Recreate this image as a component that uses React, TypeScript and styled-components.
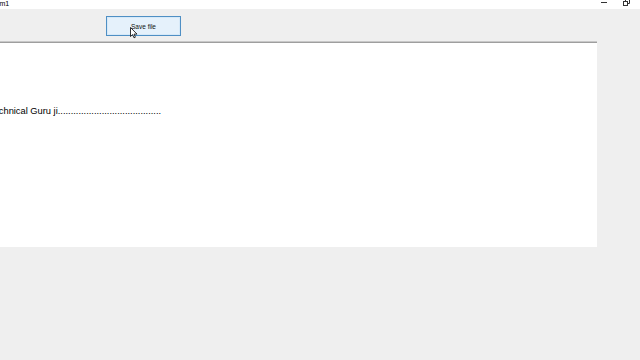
import * as React from 'react';
import styled, { createGlobalStyle } from 'styled-components';

const SHIFT = 11;

const GlobalStyle = createGlobalStyle`
    html, body {
        margin: 0;
        padding: 0;
        width: 640px;
        height: 360px;
        overflow: hidden;
        background: #efefef;
        font-family: "Liberation Sans", Arial, sans-serif;
    }
`;

const Screen = styled.div`
    position: relative;
    width: 640px;
    height: 360px;
    overflow: hidden;
    background: #efefef;
`;

const TitleBar = styled.div`
    height: 9px;
    background: #ffffff;
    display: flex;
    align-items: center;
    justify-content: space-between;
`;

const TitleText = styled.div`
    margin-left: -${SHIFT}px;
    font-size: 7px;
    line-height: 9px;
    margin-top: -2px;
    color: #000;
`;

const WindowButtons = styled.div`
    display: flex;
    align-items: center;
    gap: 16px;
    padding-right: 10px;
    height: 9px;
`;

const Minimize = styled.div`
    width: 6px;
    height: 1px;
    background: #333;
    margin-top: -4px;
`;

const Restore = styled.svg`
    width: 7px;
    height: 7px;
    margin-top: -5px;
`;

const Toolbar = styled.div`
    height: 33px;
    display: flex;
    align-items: flex-start;
    padding-top: 7px;
    box-sizing: border-box;
    padding-left: 106px;
`;

const Button = styled.button`
    width: 75px;
    height: 20px;
    background: #e5f1fb;
    border: 1px solid #4f8fc4;
    box-shadow: inset 0 0 0 1px #d6e9f8;
    font-family: "Liberation Sans", Arial, sans-serif;
    font-size: 6.5px;
    color: #111;
    padding: 0;
`;

const TextArea = styled.div`
    width: 597px;
    height: 205px;
    background: #ffffff;
    border-top: 1px solid #9e9e9e;
    box-shadow: 0 -1px 0 #c8c8c8;
    box-sizing: border-box;
    padding-top: 63px;
`;

const Line = styled.div`
    margin-left: -${SHIFT}px;
    font-size: 9.3px;
    line-height: 11px;
    color: #000;
    white-space: nowrap;
`;

const Cursor = styled.svg`
    position: absolute;
    left: 130px;
    top: 27px;
    width: 8px;
    height: 12px;
`;

export default function App() {
    return (
        <Screen>
            <GlobalStyle />
            <TitleBar>
                <TitleText>Form1</TitleText>
                <WindowButtons>
                    <Minimize />
                    <Restore viewBox="0 0 7 7">
                        <rect x="0.5" y="2.5" width="4" height="4" fill="none" stroke="#333" strokeWidth="1" />
                        <path d="M2.5 2.5 V0.5 H6.5 V4.5 H4.5" fill="none" stroke="#333" strokeWidth="1" />
                    </Restore>
                </WindowButtons>
            </TitleBar>
            <Toolbar>
                <Button>Save file</Button>
            </Toolbar>
            <TextArea>
                <Line>Technical Guru ji........................................</Line>
            </TextArea>
            <Cursor viewBox="0 0 8 12">
                <path d="M0.5 0.5 L0.5 9.5 L2.6 7.6 L4 10.8 L5.4 10.2 L4 7.1 L7 7.1 Z" fill="#fff" stroke="#000" strokeWidth="0.8" strokeLinejoin="round" />
            </Cursor>
        </Screen>
    );
}
